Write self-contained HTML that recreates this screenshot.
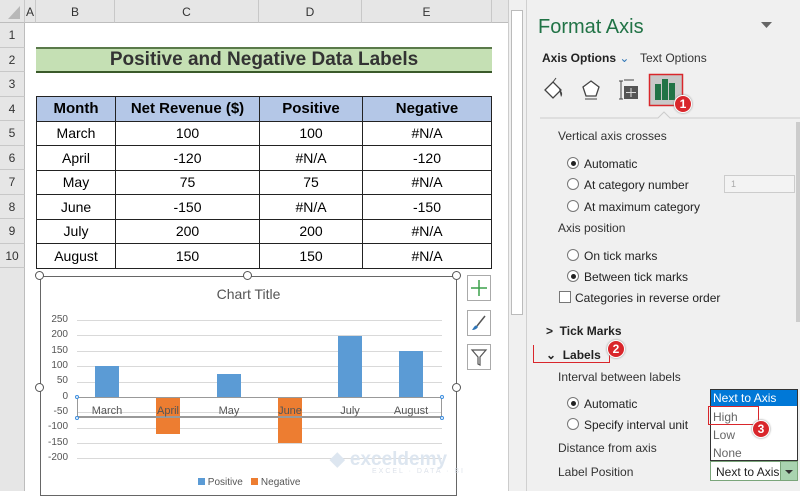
<!DOCTYPE html><html><head><style>
*{margin:0;padding:0;box-sizing:border-box}
body{width:800px;height:491px;overflow:hidden;position:relative;background:#fff;font-family:"Liberation Sans",Calibri,sans-serif;font-size:13px;color:#000}
.a{position:absolute}
.ch{position:absolute;top:0;height:23px;background:#e6e6e6;border-right:1px solid #c8c8c8;border-bottom:1px solid #bdbdbd;text-align:center;line-height:24px;font-size:12px;color:#333}
.rh{position:absolute;left:0;width:25px;background:#e6e6e6;border-bottom:1px solid #c8c8c8;border-right:1px solid #bdbdbd;text-align:center;font-size:12px;color:#333}
table{border-collapse:collapse;position:absolute;left:36px;top:96px}
td{border:1px solid #222;text-align:center;height:24.5px;font-size:14px;padding:0}
th{background:#b4c7e7;border:1px solid #222;height:24.5px;font-size:15px;font-weight:bold;padding:0}
.h{width:9px;height:9px;border:1.5px solid #555;border-radius:50%;background:#fff;position:absolute}
.yl{position:absolute;left:44px;width:24px;text-align:right;font-size:10px;color:#555}
.g{position:absolute;left:77px;width:365px;height:1px;background:#d9d9d9}
.bar{position:absolute;width:24px}
.cl{position:absolute;top:405px;font-size:11px;color:#555;text-align:center;width:60px}
.sb{position:absolute;left:467px;width:24px;height:26px;border:1px solid #aaa;background:#fff}
.p{position:absolute;left:558px;font-size:12px;color:#333}
.r{position:absolute;width:12px;height:12px;border:1px solid #777;border-radius:50%;background:#fff}
.r.on::after{content:"";position:absolute;left:2.5px;top:2.5px;width:5px;height:5px;border-radius:50%;background:#222}
.rt{position:absolute;left:584px;font-size:12px;color:#222}
.badge{position:absolute;width:18px;height:18px;border-radius:50%;background:#d9262b;color:#fff;font-weight:bold;font-size:12px;text-align:center;line-height:16px;border:1.5px solid #fff;box-shadow:0 0 2px #888}
</style></head><body>
<div class="a" style="left:0;top:0;width:3px;height:491px;background:#217346"></div>
<div class="ch" style="left:0;width:25px"><svg width="25" height="23"><polygon points="20,6 20,19 8,19" fill="#b8b8b8"/></svg></div>
<div class="ch" style="left:25px;width:11px">A</div>
<div class="ch" style="left:36px;width:79px">B</div>
<div class="ch" style="left:115px;width:144px">C</div>
<div class="ch" style="left:259px;width:103px">D</div>
<div class="ch" style="left:362px;width:130px">E</div>
<div class="ch" style="left:492px;width:16px;border-right:none"></div>
<div class="rh" style="top:23px;height:24.5px;line-height:24px">1</div>
<div class="rh" style="top:47.5px;height:24.5px;line-height:24px">2</div>
<div class="rh" style="top:72px;height:24.5px;line-height:24px">3</div>
<div class="rh" style="top:96.5px;height:24.5px;line-height:24px">4</div>
<div class="rh" style="top:121px;height:24.5px;line-height:24px">5</div>
<div class="rh" style="top:145.5px;height:24.5px;line-height:24px">6</div>
<div class="rh" style="top:170px;height:24.5px;line-height:24px">7</div>
<div class="rh" style="top:194.5px;height:24.5px;line-height:24px">8</div>
<div class="rh" style="top:219px;height:24.5px;line-height:24px">9</div>
<div class="rh" style="top:243.5px;height:24.5px;line-height:24px">10</div>
<div class="rh" style="top:268px;height:223px;border-bottom:none"></div>
<div class="a" style="left:36px;top:47px;width:456px;height:26px;background:#c5e0b4;border-top:2px solid #5a7a4a;border-bottom:2px solid #3a5a2a;text-align:center;font-weight:bold;font-size:19px;line-height:22px;color:#333">Positive and Negative Data Labels</div>
<table>
<tr><th style="width:79px">Month</th><th style="width:144px">Net Revenue ($)</th><th style="width:103px">Positive</th><th style="width:129px">Negative</th></tr>
<tr><td>March</td><td>100</td><td>100</td><td>#N/A</td></tr>
<tr><td>April</td><td>-120</td><td>#N/A</td><td>-120</td></tr>
<tr><td>May</td><td>75</td><td>75</td><td>#N/A</td></tr>
<tr><td>June</td><td>-150</td><td>#N/A</td><td>-150</td></tr>
<tr><td>July</td><td>200</td><td>200</td><td>#N/A</td></tr>
<tr><td>August</td><td>150</td><td>150</td><td>#N/A</td></tr>
</table>
<!-- chart -->
<div class="a" style="left:40px;top:276px;width:417px;height:220px;border:1.5px solid #666;background:#fff"></div>
<div class="h" style="left:35px;top:271px"></div><div class="h" style="left:243px;top:271px"></div><div class="h" style="left:452px;top:271px"></div>
<div class="h" style="left:35px;top:383px"></div><div class="h" style="left:452px;top:383px"></div>
<div class="a" style="left:40px;top:286px;width:417px;text-align:center;font-size:14px;color:#555">Chart Title</div>
<div class="g" style="top:320px"></div><div class="g" style="top:335px"></div><div class="g" style="top:351px"></div><div class="g" style="top:366px"></div><div class="g" style="top:382px"></div><div class="g" style="top:412px"></div><div class="g" style="top:428px"></div><div class="g" style="top:443px"></div><div class="g" style="top:458px"></div>
<div class="yl" style="top:314px">250</div><div class="yl" style="top:329px">200</div><div class="yl" style="top:345px">150</div><div class="yl" style="top:360px">100</div><div class="yl" style="top:375px">50</div><div class="yl" style="top:391px">0</div><div class="yl" style="top:406px">-50</div><div class="yl" style="top:421px">-100</div><div class="yl" style="top:437px">-150</div><div class="yl" style="top:452px">-200</div>
<div class="bar" style="left:95px;top:366px;height:31px;background:#5b9bd5"></div>
<div class="bar" style="left:217px;top:374px;height:23px;background:#5b9bd5"></div>
<div class="bar" style="left:338px;top:336px;height:61px;background:#5b9bd5"></div>
<div class="bar" style="left:399px;top:351px;height:46px;background:#5b9bd5"></div>
<div class="bar" style="left:156px;top:397px;height:37px;background:#ed7d31"></div>
<div class="bar" style="left:278px;top:397px;height:46px;background:#ed7d31"></div>
<div class="a" style="left:77px;top:397px;width:365px;height:21px;border:1px solid #999;border-bottom:2px solid #999"></div>
<div class="a" style="left:75px;top:395px;width:4px;height:4px;border:1px solid #3b8ee0;border-radius:50%;background:#fff"></div>
<div class="a" style="left:440px;top:395px;width:4px;height:4px;border:1px solid #3b8ee0;border-radius:50%;background:#fff"></div>
<div class="a" style="left:75px;top:416px;width:4px;height:4px;border:1px solid #3b8ee0;border-radius:50%;background:#fff"></div>
<div class="a" style="left:440px;top:416px;width:4px;height:4px;border:1px solid #3b8ee0;border-radius:50%;background:#fff"></div>
<div class="cl" style="left:77px">March</div><div class="cl" style="left:138px">April</div><div class="cl" style="left:199px">May</div><div class="cl" style="left:260px">June</div><div class="cl" style="left:320px">July</div><div class="cl" style="left:381px">August</div>
<div class="a" style="left:330px;top:448px;font-size:19px;font-weight:bold;color:#dde6f0">&#9670; exceldemy</div>
<div class="a" style="left:372px;top:468px;font-size:7px;color:#dde2ea;letter-spacing:2px">EXCEL · DATA · BI</div>
<div class="a" style="left:198px;top:477px;font-size:10px;color:#555"><span style="display:inline-block;width:7px;height:7px;background:#5b9bd5"></span> Positive &nbsp;&nbsp;<span style="display:inline-block;width:7px;height:7px;background:#ed7d31"></span> Negative</div>
<div class="sb" style="top:275px"><svg width="22" height="24"><path d="M11 4V20M3 12H19" stroke="#3ca04b" stroke-width="1.5"/></svg></div>
<div class="sb" style="top:310px"><svg width="22" height="24"><path d="M17 5L9 15" stroke="#555" stroke-width="1.5"/><path d="M6 16Q8 13 10 16Q8 19 4 19Z" fill="#2e75b6"/></svg></div>
<div class="sb" style="top:344px"><svg width="22" height="24"><path d="M4 5H18L12 12V20L10 19V12Z" fill="none" stroke="#555" stroke-width="1.2"/></svg></div>
<!-- scrollbar -->
<div class="a" style="left:508px;top:0;width:18px;height:491px;background:#f0f0f0;border-left:1px solid #ccc"></div>
<div class="a" style="left:511px;top:10px;width:12px;height:305px;background:#fff;border:1px solid #bbb"></div>
<!-- pane -->
<div class="a" style="left:526px;top:0;width:274px;height:491px;background:#f0f0f0;border-left:1px solid #d0d0d0"></div>
<div class="a" style="left:538px;top:16px;font-size:20px;color:#217346">Format Axis</div>
<svg class="a" style="left:761px;top:22px" width="12" height="8"><polygon points="0,0 11,0 5.5,6" fill="#666"/></svg>
<div class="a" style="left:542px;top:51px;font-size:12px;font-weight:bold;color:#222">Axis Options <span style="color:#2e75b6;font-weight:normal">&#8964;</span></div>
<div class="a" style="left:640px;top:51px;font-size:12px;color:#333">Text Options</div>
<svg class="a" style="left:540px;top:72px" width="260" height="50">
<path d="M5 18L13 10L21 18L13 26Z" fill="#fff" stroke="#444" stroke-width="1.3"/><path d="M13 10L16 6" stroke="#444"/><path d="M19 17Q24 21 21 25Z" fill="#444"/>
<path d="M51 9L59 15L56 24L46 24L43 15Z" fill="#fff" stroke="#444" stroke-width="1.3"/><path d="M45 27H57" stroke="#444"/>
<path d="M81 9V27M79 9H83M79 27H83M84 8H94" stroke="#444"/><rect x="84" y="14" width="14" height="13" fill="#555"/><path d="M91 16V25M86 20.5H96" stroke="#ddd"/>
<rect x="109.5" y="2.5" width="33" height="31" fill="#c8c8c8" stroke="#d9262b" stroke-width="1.5"/>
<rect x="115" y="12" width="6" height="16" fill="#217346"/><rect x="122" y="7" width="6" height="21" fill="#217346"/><rect x="129" y="11" width="6" height="17" fill="#217346"/>
<path d="M0 46H118L124 40L130 46H260" fill="none" stroke="#ccc"/>
</svg>
<div class="badge" style="left:674px;top:95px">1</div>
<div class="a" style="left:796px;top:122px;width:4px;height:200px;background:#ccc"></div>
<div class="p" style="top:129px">Vertical axis crosses</div>
<div class="r on" style="left:567px;top:157px"></div><div class="rt" style="top:157px">Automatic</div>
<div class="r" style="left:567px;top:178px"></div><div class="rt" style="top:178px">At category number</div>
<div class="a" style="left:724px;top:175px;width:71px;height:18px;border:1px solid #ccc;background:#f3f3f3;font-size:9px;color:#aaa;padding:3px 6px">1</div>
<div class="r" style="left:567px;top:200px"></div><div class="rt" style="top:200px">At maximum category</div>
<div class="p" style="top:221px">Axis position</div>
<div class="r" style="left:567px;top:249px"></div><div class="rt" style="top:249px">On tick marks</div>
<div class="r on" style="left:567px;top:270px"></div><div class="rt" style="top:270px">Between tick marks</div>
<div class="a" style="left:559px;top:291px;width:12px;height:12px;border:1px solid #777;background:#fff"></div><div class="rt" style="top:291px;left:575px">Categories in reverse order</div>
<div class="a" style="left:546px;top:324px;font-size:12px;font-weight:bold;color:#222">&gt; &nbsp;Tick Marks</div>
<div class="a" style="left:533px;top:345px;width:77px;height:18px;border:1.5px solid #d9262b;border-top:none"></div>
<div class="a" style="left:546px;top:348px;font-size:12px;font-weight:bold;color:#222">&#8964; &nbsp;Labels</div>
<div class="badge" style="left:607px;top:340px">2</div>
<div class="p" style="top:370px">Interval between labels</div>
<div class="r on" style="left:567px;top:397px"></div><div class="rt" style="top:397px">Automatic</div>
<div class="r" style="left:567px;top:418px"></div><div class="rt" style="top:418px">Specify interval unit</div>
<div class="p" style="top:441px">Distance from axis</div>
<div class="p" style="top:465px">Label Position</div>
<div class="a" style="left:710px;top:389px;width:88px;height:72px;background:#fff;border:1px solid #333"></div>
<div class="a" style="left:711px;top:390px;width:86px;height:16px;background:#0078d7;color:#fff;font-size:12px;padding-left:2px;line-height:16px">Next to Axis</div>
<div class="a" style="left:713px;top:410px;font-size:12px;color:#666">High</div>
<div class="a" style="left:708px;top:406px;width:51px;height:19px;border:1.5px solid #d9262b"></div>
<div class="a" style="left:713px;top:428px;font-size:12px;color:#666">Low</div>
<div class="a" style="left:713px;top:446px;font-size:12px;color:#666">None</div>
<div class="badge" style="left:752px;top:420px">3</div>
<div class="a" style="left:710px;top:461px;width:88px;height:20px;background:#fff;border:1px solid #7aa57a;font-size:12px;color:#222;padding:3px 5px">Next to Axis</div>
<div class="a" style="left:780px;top:462px;width:17px;height:18px;background:#a9d3b0;border-left:1px solid #7aa57a"><svg width="16" height="18"><polygon points="4,8 12,8 8,12" fill="#333"/></svg></div>
</body></html>
